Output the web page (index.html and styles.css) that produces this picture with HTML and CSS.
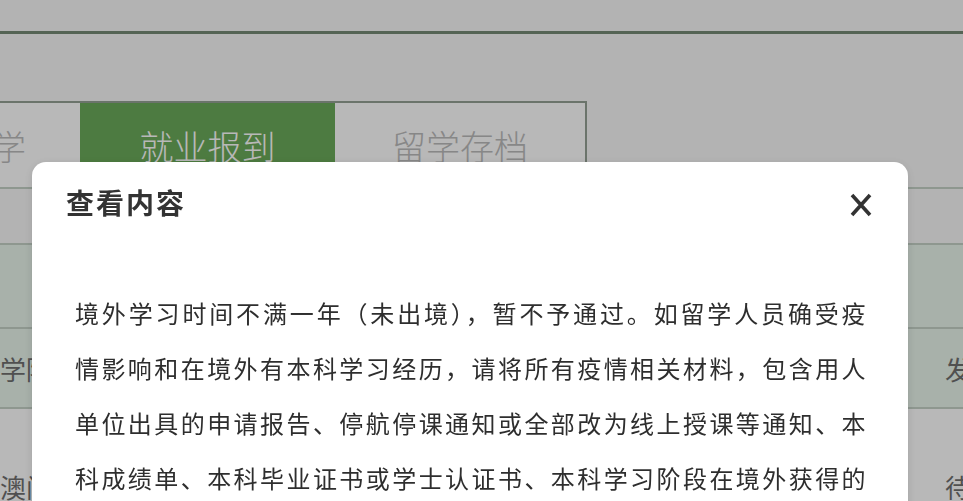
FILE: index.html
```html
<!DOCTYPE html>
<html>
<head>
	<meta charset="utf-8">
	<title>查看内容</title>
	<link rel="stylesheet" href="styles.css">
</head>
<body>
	<div class="header"></div>

	<div class="tabBar">
		<div class="tab tabFirst">留学</div>
		<div class="tab tabActive">就业报到</div>
		<div class="tab tabLast">留学存档</div>
	</div>

	<div class="listWrap">
		<div class="row rowHead"><span></span><span></span></div>
		<div class="row rowGreen"><span>学院</span><span>发放</span></div>
		<div class="row rowPlain"><span>澳门</span><span>待审</span></div>
	</div>

	<div class="mask"></div>

	<div class="dialog">
		<div class="dialogHead">
			<h2 class="dialogTitle">查看内容</h2>
			<span class="closeBtn">
				<svg width="22" height="24" viewBox="0 0 22 24">
					<path d="M2 2 L20 22 M20 2 L2 22" stroke="#333" stroke-width="3.6" fill="none"/>
				</svg>
			</span>
		</div>
		<div class="dialogBody">
			<p>境外学习时间不满一年（未出境），暂不予通过。如留学人员确受疫情影响和在境外有本科学习经历，请将所有疫情相关材料，包含用人单位出具的申请报告、停航停课通知或全部改为线上授课等通知、本科成绩单、本科毕业证书或学士认证书、本科学习阶段在境外获得的成绩单等材料一并上传。</p>
		</div>
	</div>
</body>
</html>
```

FILE: styles.css
```css
body{
	margin: 0;
	width: 963px;
	height: 501px;
	overflow: hidden;
	background: #f9f9f9;
	font-family: "Noto Sans CJK SC", "Noto Sans", sans-serif;
}
.header{
	height: 31px;
	border-bottom: 3px solid #768b76;
}
.tabBar{
	display: flex;
	margin-top: 67px;
	height: 86px;
	border-bottom: 2px solid #c5d2c7;
}
.tab{
	display: flex;
	align-items: center;
	justify-content: center;
	box-sizing: border-box;
	width: 255px;
	border-top: 2px solid #95a195;
	font-size: 34px;
	font-weight: 300;
	color: #bcbcbc;
	background: #fff;
	white-space: nowrap;
}
.tabFirst{
	width: 80px;
	justify-content: flex-end;
	padding-right: 54px;
	overflow: hidden;
}
.tabActive{
	background: #6bab5a;
	color: #fff;
}
.tabLast{
	width: 252px;
	border-right: 2px solid #95a195;
}
.listWrap{
	width: 1011px;
	margin-top: 54px;
}
.row{
	display: flex;
	justify-content: space-between;
	align-items: center;
	padding-right: 14px;
	border-top: 2px solid #c5d2c7;
	font-size: 26px;
	color: #6f6f6f;
}
.rowHead{
	height: 82px;
	background: #e9f5ec;
}
.rowGreen{
	height: 78px;
	background: #e9f5ec;
}
.rowPlain{
	height: 154px;
	background: #fff;
}
.mask{
	position: fixed;
	top: 0;
	left: 0;
	right: 0;
	bottom: 0;
	background: rgba(0, 0, 0, 0.28);
}
.dialog{
	position: fixed;
	top: 162px;
	left: 32px;
	width: 876px;
	bottom: -40px;
	background: #fff;
	border-radius: 14px;
	box-shadow: 0 2px 10px rgba(0, 0, 0, 0.12);
}
.dialogHead{
	display: flex;
	justify-content: space-between;
	align-items: center;
	padding: 20px 36px 0 34px;
}
.dialogTitle{
	margin: 0;
	font-size: 28px;
	line-height: 40px;
	font-weight: 700;
	letter-spacing: 2px;
	color: #333;
}
.closeBtn{
	display: flex;
	margin-top: 6px;
}
.dialogBody{
	padding: 63px 0 0 43px;
}
.dialogBody p{
	margin: 0;
	width: 793px;
	font-size: 24px;
	line-height: 55px;
	letter-spacing: 2.4px;
	text-align: justify;
	color: #2e2e2e;
}
```
